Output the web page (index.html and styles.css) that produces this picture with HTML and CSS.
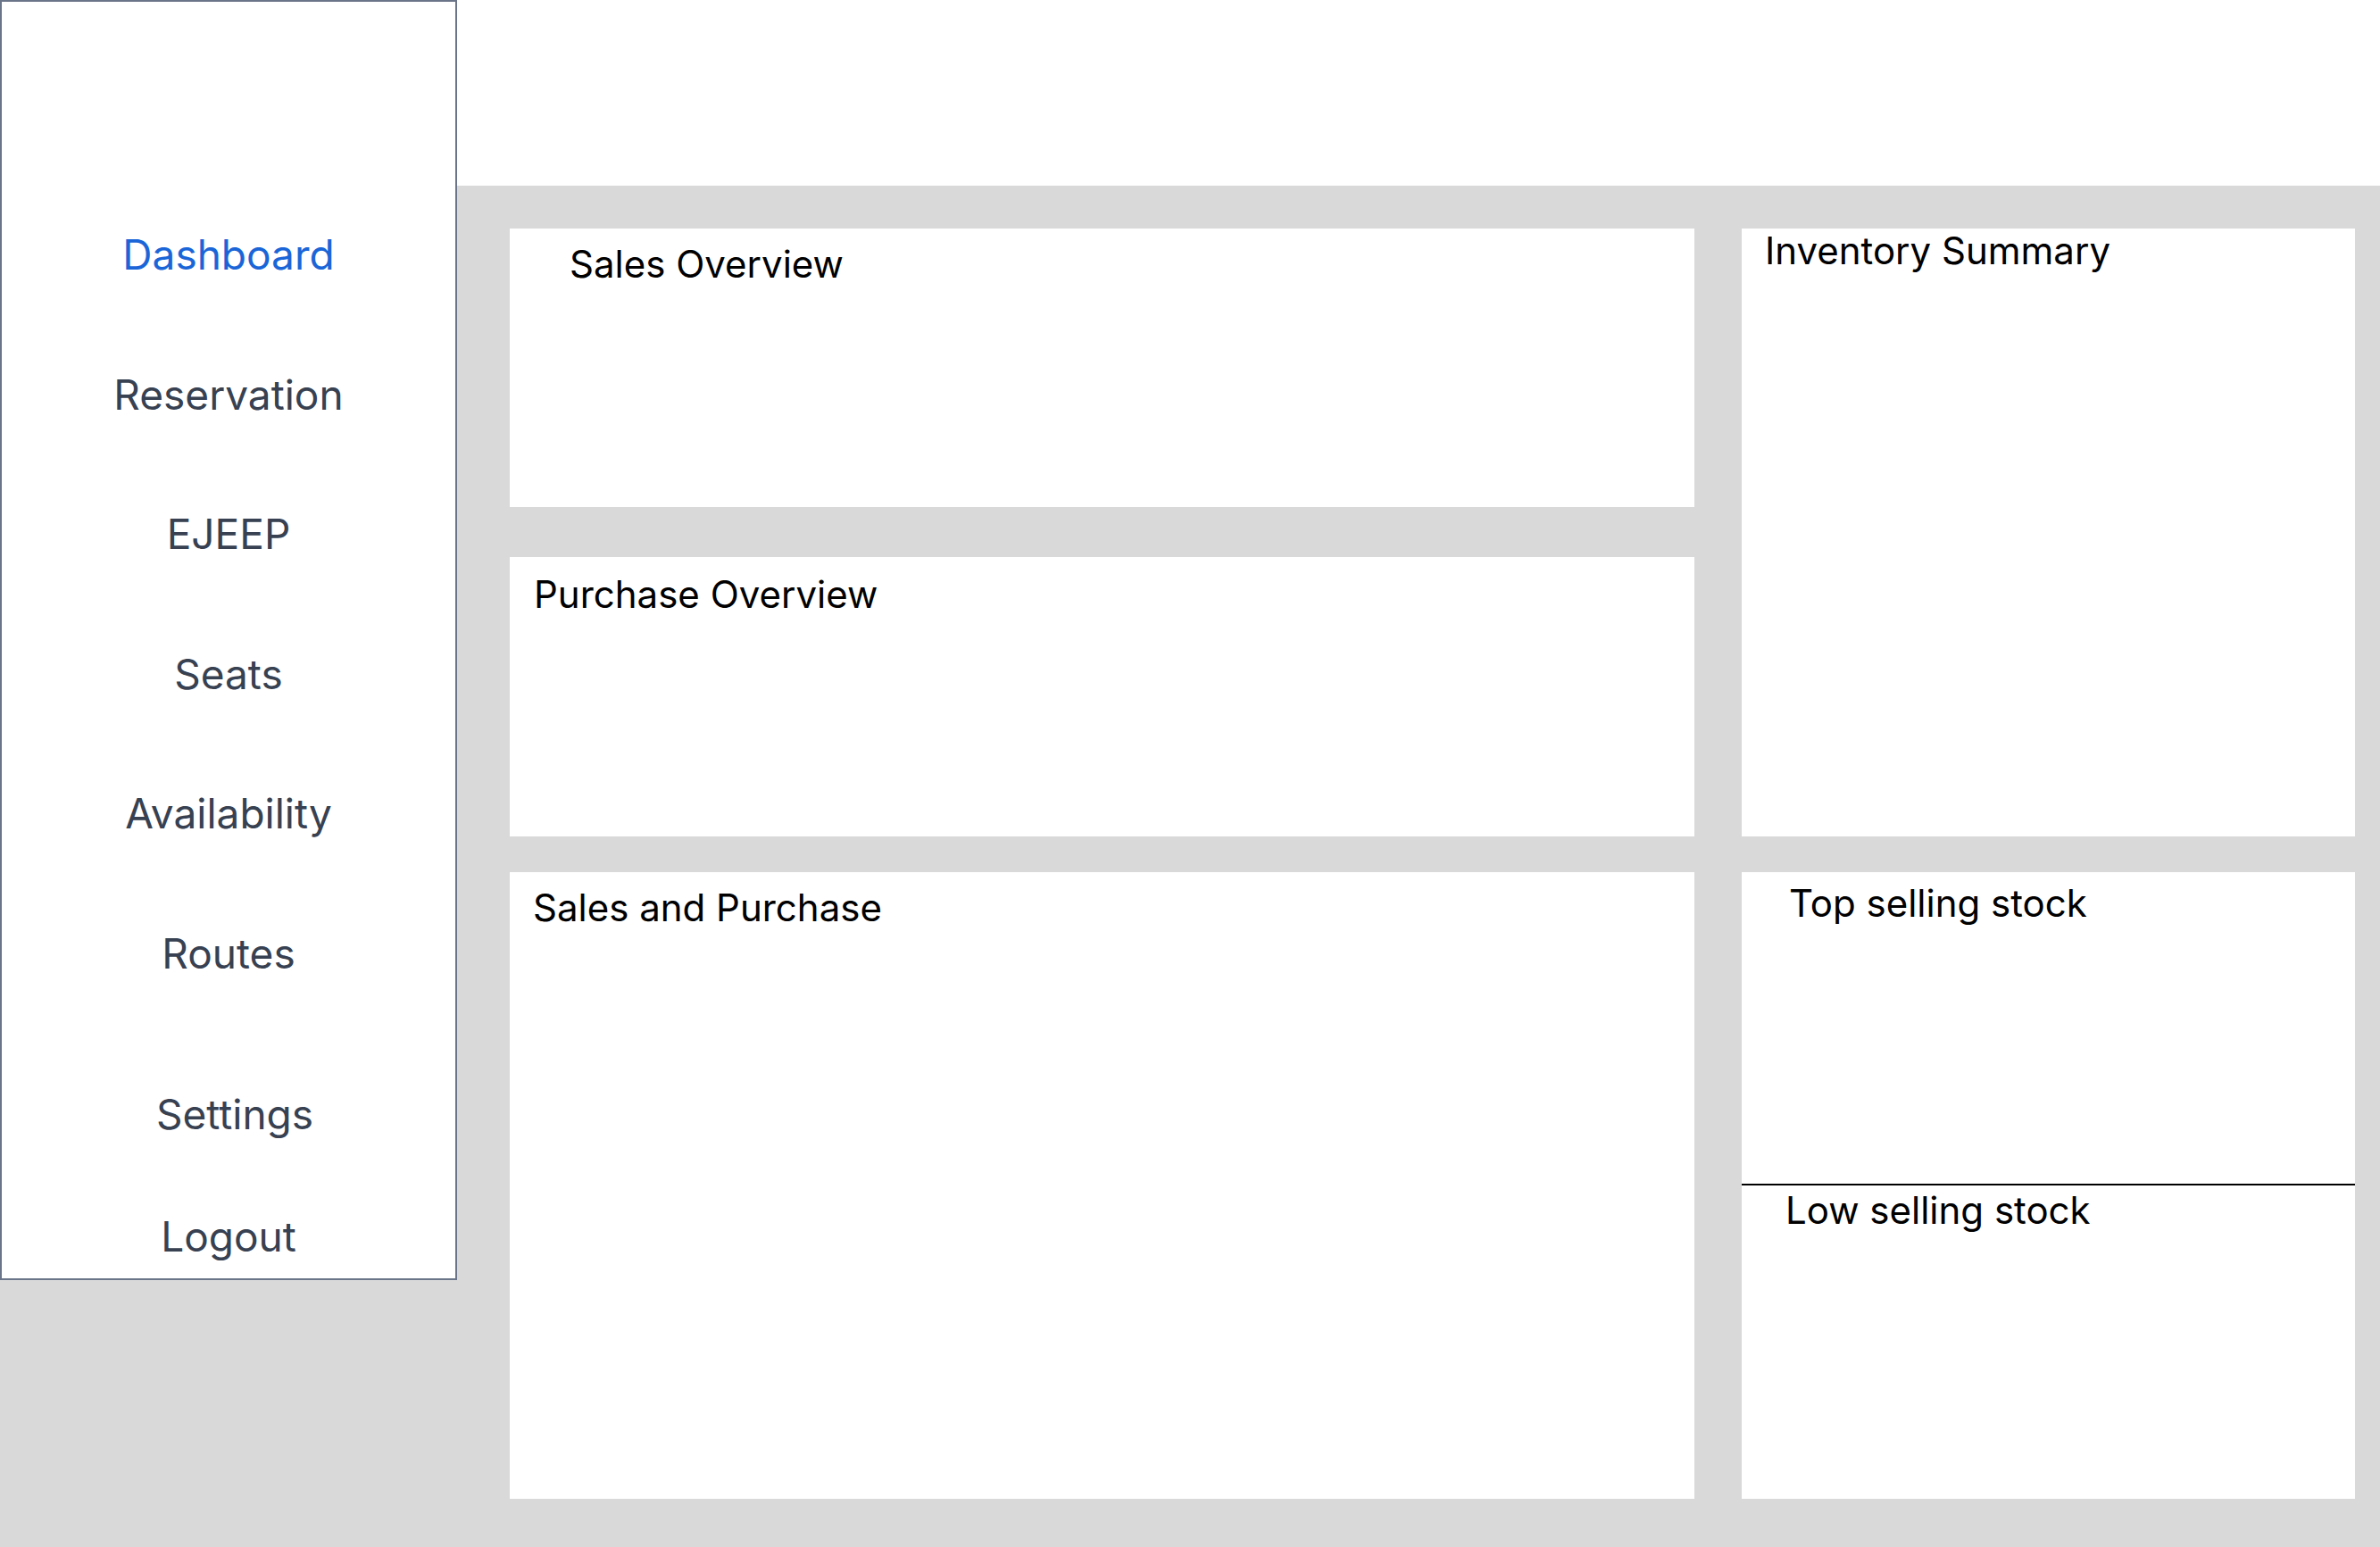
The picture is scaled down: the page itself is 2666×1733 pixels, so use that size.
FILE: index.html
```html
<!DOCTYPE html>
<html lang="en">
<head>
<meta charset="utf-8">
<title>Dashboard</title>
<link rel="stylesheet" href="styles.css">
</head>
<body>
<div class="app">
  <nav class="sidebar">
    <a class="nav-item active" href="#">Dashboard</a>
    <a class="nav-item" href="#">Reservation</a>
    <a class="nav-item" href="#">EJEEP</a>
    <a class="nav-item" href="#">Seats</a>
    <a class="nav-item" href="#">Availability</a>
    <a class="nav-item" href="#">Routes</a>
    <a class="nav-item nav-settings" href="#">Settings</a>
    <a class="nav-item nav-logout" href="#">Logout</a>
  </nav>
  <header class="topbar"></header>
  <main class="main">
    <section class="card card-sales">
      <h2 class="card-title">Sales Overview</h2>
    </section>
    <section class="card card-purchase">
      <h2 class="card-title">Purchase Overview</h2>
    </section>
    <section class="card card-inventory">
      <h2 class="card-title">Inventory Summary</h2>
    </section>
    <section class="card card-salespurchase">
      <h2 class="card-title">Sales and Purchase</h2>
    </section>
    <section class="card card-stock">
      <div class="stock-part stock-top">
        <h2 class="card-title">Top selling stock</h2>
      </div>
      <div class="stock-part stock-low">
        <h2 class="card-title">Low selling stock</h2>
      </div>
    </section>
  </main>
</div>
</body>
</html>
```

FILE: styles.css
```css
html, body {
  margin: 0;
  padding: 0;
}

body {
  background: #d9d9d9;
  font-family: "Inter", "Noto Sans", "Liberation Sans", sans-serif;
  color: #000;
}

.app {
  display: grid;
  grid-template-columns: 512px 1fr;
  grid-template-rows: 208px 1fr;
  min-height: 1733px;
}

/* Sidebar */
.sidebar {
  grid-column: 1;
  grid-row: 1 / 3;
  align-self: start;
  height: 1434px;
  box-sizing: border-box;
  background: #fff;
  border: 2px solid #6b7589;
  display: flex;
  flex-direction: column;
  align-items: center;
  gap: 100.6px;
  padding-top: 255px;
}

.nav-item {
  font-size: 46px;
  line-height: 56px;
  font-weight: 400;
  color: #374151;
  text-decoration: none;
  white-space: nowrap;
}

.nav-item.active {
  color: #1a66d8;
}

.nav-settings {
  margin-top: 23.4px;
  margin-left: 14px;
}

.nav-logout {
  margin-top: -19.6px;
}

/* Top bar */
.topbar {
  grid-column: 2;
  grid-row: 1;
  background: #fff;
}

/* Main content */
.main {
  grid-column: 2;
  grid-row: 2;
  display: grid;
  grid-template-columns: 1327px 1fr;
  grid-template-rows: 312px 56px 313px 40px 702px;
  column-gap: 53px;
  padding: 48px 28px 54px 59px;
}

.card {
  background: #fff;
  box-sizing: border-box;
}

.card-title {
  margin: 0;
  font-size: 42px;
  line-height: 50px;
  font-weight: 400;
  color: #000;
  white-space: nowrap;
}

.card-sales {
  grid-column: 1;
  grid-row: 1;
  padding: 15px 0 0 67px;
}

.card-purchase {
  grid-column: 1;
  grid-row: 3;
  padding: 17px 0 0 27px;
}

.card-inventory {
  grid-column: 2;
  grid-row: 1 / 4;
  padding: 0 0 0 26px;
}

.card-salespurchase {
  grid-column: 1;
  grid-row: 5;
  padding: 15px 0 0 26px;
}

.card-stock {
  grid-column: 2;
  grid-row: 5;
  display: flex;
  flex-direction: column;
}

.stock-part {
  box-sizing: border-box;
}

.stock-top {
  height: 351px;
  padding: 10px 0 0 53px;
  border-bottom: 2px solid #000;
}

.stock-low {
  flex: 1;
  padding: 3px 0 0 49px;
}
```
